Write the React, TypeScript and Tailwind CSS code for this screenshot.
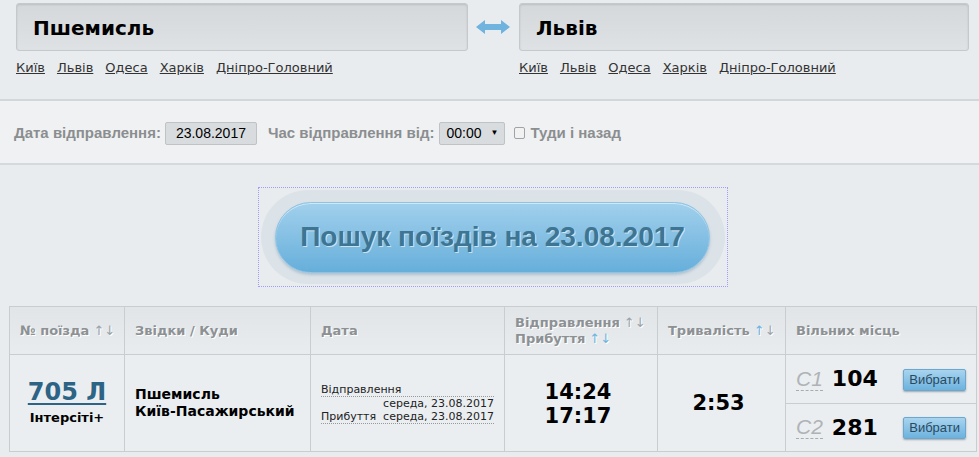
import React from "react";

const verdana = { fontFamily: '"DejaVu Sans", Verdana, sans-serif' };

function Arrows() {
  return <span className="text-[#9aa3a9] font-normal ml-1">↑↓</span>;
}

function CityLinks() {
  const cities = ["Київ", "Львів", "Одеса", "Харків", "Дніпро-Головний"];
  return (
    <div className="flex gap-[12px] mt-[7px] text-[13px] text-[#333]" style={verdana}>
      {cities.map((c) => (
        <a key={c} className="underline cursor-pointer">{c}</a>
      ))}
    </div>
  );
}

function CityInput({ value }: { value: string }) {
  return (
    <div>
      <div className="h-[48px] rounded-[3px] border border-[#c5c9cc] bg-gradient-to-b from-[#d5d8db] to-[#dfe2e5] shadow-[inset_0_1px_2px_rgba(0,0,0,0.12)] flex items-center pl-[16px] pt-[2px]">
        <span className="text-[20px] font-bold text-black" style={verdana}>{value}</span>
      </div>
      <CityLinks />
    </div>
  );
}

function Choose() {
  return (
    <button className="h-[22px] px-[5px] rounded-[2px] border border-[#6aa8cf] bg-gradient-to-b from-[#a8d4ef] to-[#6cb2de] text-[13px] text-[#2a4a60] shadow-[0_1px_2px_rgba(0,0,0,0.3)] font-['Liberation_Sans',Arial,sans-serif]">
      Вибрати
    </button>
  );
}

export default function App() {
  return (
    <div className="w-[979px] h-[457px] bg-[#e9ecef] overflow-hidden font-['Liberation_Sans',Arial,sans-serif]">
      {/* Stations */}
      <div className="h-[101px] border-b-2 border-[#d3d7da] grid grid-cols-[452px_51px_450px] px-[16px] pt-[3px]">
        <CityInput value="Пшемисль" />
        <div className="flex justify-center pt-[17px] pr-[2px]">
          <svg width="34" height="14" viewBox="0 0 34 14">
            <path d="M0 7 L9 0 L9 4 L25 4 L25 0 L34 7 L25 14 L25 10 L9 10 L9 14 Z" fill="#6fb3de" />
          </svg>
        </div>
        <CityInput value="Львів" />
      </div>

      {/* Options */}
      <div className="h-[64px] bg-[#f0f1f2] border-b-2 border-[#d3d9dc] flex items-center pl-[14px] pt-[2px] text-[15px] font-bold text-[#8b8e90]">
        <span>Дата відправлення:</span>
        <div className="ml-[4px] w-[92px] h-[23px] rounded-[2px] border border-[#bfc3c6] bg-[#d9dcdf] flex items-center justify-center text-black font-normal text-[14px]">23.08.2017</div>
        <span className="ml-[11px]">Час відправлення від:</span>
        <div className="ml-[5px] w-[66px] h-[23px] rounded-[2px] border border-[#bfc3c6] bg-[#d9dcdf] flex items-center pl-[6px] text-black font-normal text-[14px]">
          00:00
          <span className="ml-auto mr-[6px] text-[8px]">▼</span>
        </div>
        <span className="ml-[9px] w-[11px] h-[12px] rounded-[2px] border border-[#a0a4a7] bg-[#f2f2f2]" />
        <span className="ml-[5px]">Туди і назад</span>
      </div>

      {/* Search button */}
      <div className="h-[141px] flex justify-center pt-[22px] pl-[6px]">
        <div className="w-[470px] h-[100px] border border-dotted border-[#a49ef2] flex items-center justify-center">
          <div className="w-[464px] h-[94px] rounded-full bg-[#dce3e8] flex items-center justify-center">
            <div className="w-[435px] h-[71px] rounded-full border border-[#8ec3e4] bg-gradient-to-b from-[#a1d0ec] to-[#66afdb] shadow-[0_2px_3px_rgba(90,130,160,0.35),inset_0_1px_0_rgba(255,255,255,0.5)] flex items-center justify-center">
              <span className="text-[28px] font-bold text-[#3d7593] [text-shadow:1px_1px_0_rgba(255,255,255,0.6)]">Пошук поїздів на 23.08.2017</span>
            </div>
          </div>
        </div>
      </div>

      {/* Table */}
      <div className="px-[9px]" style={verdana}>
        <div className="w-[968px] border border-[#c9cdd0] grid grid-cols-[115px_186px_194px_153px_128px_1fr]">
          {[
            <span>№ поїзда<Arrows /></span>,
            <span>Звідки / Куди</span>,
            <span>Дата</span>,
            <span className="leading-[16px]">Відправлення<span className="text-[#9aa3a9] font-normal ml-1">↑↓</span><br />Прибуття<span className="text-[#6fb3de] font-normal ml-1">↑↓</span></span>,
            <span>Тривалість<span className="text-[#6fb3de] font-normal ml-1">↑</span><span className="text-[#9aa3a9] font-normal">↓</span></span>,
            <span>Вільних місць</span>,
          ].map((h, i) => (
            <div
              key={i}
              className={`h-[48px] bg-gradient-to-b from-[#e1e5e8] to-[#e8ecef] border-b border-[#c9cdd0] flex items-center pl-[10px] text-[13px] font-bold text-[#8d9194] [text-shadow:1px_1px_0_#fff] ${i < 5 ? "border-r" : ""}`}
            >
              {h}
            </div>
          ))}

          {/* Body */}
          <div className="h-[96px] border-r border-[#c9cdd0] flex flex-col items-center justify-center bg-[#eaeef1]">
            <span className="text-[24px] font-bold text-[#2d6384] underline decoration-[2px] underline-offset-[3px] leading-[28px]">705 Л</span>
            <span className="text-[13px] font-bold text-black mt-[2px]">Інтерсіті+</span>
          </div>
          <div className="h-[96px] border-r border-[#c9cdd0] flex flex-col justify-center pl-[10px] text-[14px] font-bold text-black leading-[17px] bg-[#eaeef1]">
            <span>Пшемисль</span>
            <span>Київ-Пасажирський</span>
          </div>
          <div className="h-[96px] border-r border-[#c9cdd0] flex flex-col justify-center pl-[10px] pr-[10px] text-[11px] text-[#222] leading-[13px] bg-[#eaeef1]">
            <div className="border-b border-dotted border-[#999]">Відправлення</div>
            <div className="text-right">середа, 23.08.2017</div>
            <div className="border-b border-dotted border-[#999] flex justify-between">
              <span>Прибуття</span>
              <span>середа, 23.08.2017</span>
            </div>
          </div>
          <div className="h-[96px] border-r border-[#c9cdd0] flex flex-col items-center justify-center text-[21px] font-bold text-black leading-[24px] bg-[#eaeef1] pr-[6px] pt-[2px]">
            <span>14:24</span>
            <span>17:17</span>
          </div>
          <div className="h-[96px] border-r border-[#c9cdd0] flex items-center justify-center text-[21px] font-bold text-black bg-[#eaeef1] pr-[6px] pt-[2px]">
            2:53
          </div>
          <div className="h-[96px] flex flex-col bg-[#eaeef1]">
            {[
              ["С1", "104"],
              ["С2", "281"],
            ].map(([c, n], i) => (
              <div key={c} className={`flex-1 flex items-center pl-[10px] pr-[10px] ${i === 0 ? "border-b border-[#c9cdd0]" : ""}`}>
                <span className="text-[21px] italic text-[#b0b3b5] border-b border-dashed border-[#a9acae] leading-[23px] font-['Liberation_Sans',Arial,sans-serif]">{c}</span>
                <span className="ml-[9px] text-[22px] font-bold text-black">{n}</span>
                <span className="ml-auto"><Choose /></span>
              </div>
            ))}
          </div>
        </div>
      </div>
    </div>
  );
}
